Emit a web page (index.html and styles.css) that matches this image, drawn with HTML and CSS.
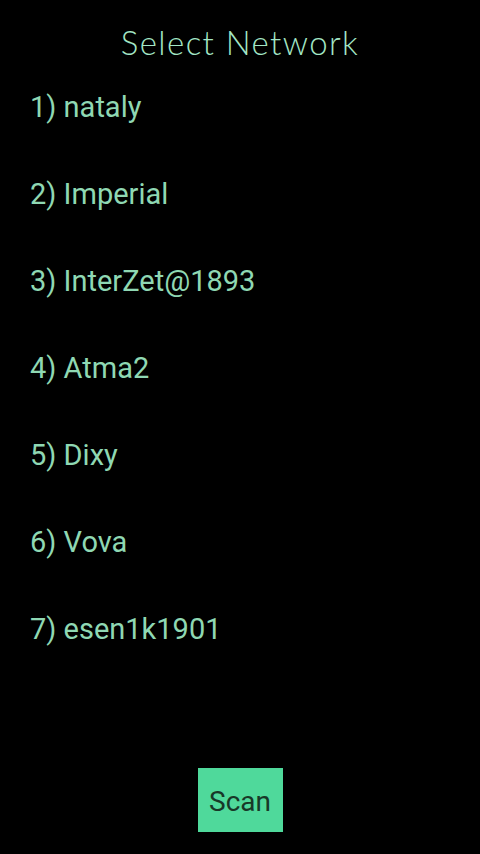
FILE: index.html
```html
<!DOCTYPE html>
<html lang="en">
<head>
    <meta charset="UTF-8">
    <meta name="viewport" content="width=device-width, initial-scale=1.0">
    <title>Select Network</title>
    <link rel="stylesheet" href="styles.css">
</head>
<body>
    <div class="wrap">
        <h1 class="title">Select Network</h1>
        <ul class="netList">
            <li>1) nataly</li>
            <li>2) Imperial</li>
            <li>3) InterZet@1893</li>
            <li>4) Atma2</li>
            <li>5) Dixy</li>
            <li>6) Vova</li>
            <li>7) esen1k1901</li>
        </ul>
        <button class="scanBtn" type="button">Scan</button>
    </div>
</body>
</html>
```
FILE: styles.css
```css
html, body{
    margin: 0;
    padding: 0;
    background: #000;
}
.wrap{
    width: 480px;
    height: 854px;
    display: flex;
    flex-direction: column;
    align-items: center;
    box-sizing: border-box;
    font-family: Roboto, "Liberation Sans", sans-serif;
}
.title{
    margin: 22px 0 0;
    font-family: Lato, Roboto, sans-serif;
    font-weight: 300;
    font-size: 33px;
    line-height: 40px;
    color: #a3e6c6;
    letter-spacing: 1.4px;
}
/* network list */
.netList{
    list-style: none;
    margin: 21px 0 0;
    padding: 0 0 0 30px;
    align-self: stretch;
}
.netList li{
    height: 87px;
    font-size: 29px;
    line-height: 48px;
    color: #8fd8b3;
}
.scanBtn{
    margin-top: auto;
    margin-bottom: 22px;
    width: 85px;
    height: 64px;
    border: none;
    background: #4fd99b;
    color: #183828;
    font-family: Roboto, sans-serif;
    font-size: 28px;
    padding: 3px 0 0;
}
```
